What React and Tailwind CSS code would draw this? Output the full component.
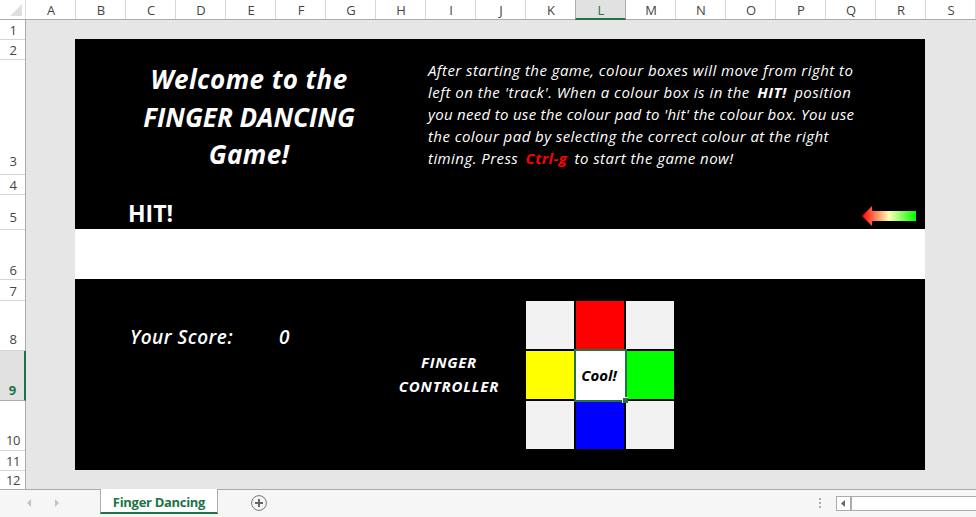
const COLUMNS = 'ABCDEFGHIJKLMNOPQRS'.split('');

const ROWS = [
  ['1', 'h-[20px]'],
  ['2', 'h-[20px]'],
  ['3', 'h-[115px] pb-[4px]'],
  ['4', 'h-[20px]'],
  ['5', 'h-[35px] pb-[3px]'],
  ['6', 'h-[50px]'],
  ['7', 'h-[21px]'],
  ['8', 'h-[50px] pb-[2px]'],
  ['9', 'h-[50px] pb-px'],
  ['10', 'h-[50px] pb-px'],
  ['11', 'h-[20px]'],
  ['12', 'h-[18px]'],
];

const PAD = [
  'bg-[#f2f2f2]', 'bg-[#ff0000]', 'bg-[#f2f2f2]',
  'bg-[#ffff00]', 'bg-white', 'bg-[#00ff00]',
  'bg-[#f2f2f2]', 'bg-[#0000ff]', 'bg-[#f2f2f2]',
];

function ColumnHeader() {
  return (
    <div className="flex h-[20px] shrink-0 border-b border-[#ababab] bg-white">
      <div className="flex w-[26px] shrink-0 items-end justify-end border-r border-[#dcdcdc] pr-[3px] pb-[3px]">
        <svg width="12" height="12" viewBox="0 0 12 12"><path d="M12 0V12H0Z" fill="#dfdfdf" /></svg>
      </div>
      {COLUMNS.map((c) =>
        c === 'L' ? (
          <div key={c} className="-ml-px h-[20px] w-[51px] shrink-0 border-x border-b-2 border-x-[#ababab] border-b-[#217346] bg-[#e1e1e1] pl-px text-center text-[13px] leading-[21px] text-[#217346]">{c}</div>
        ) : (
          <div key={c} className="w-[50px] shrink-0 border-r border-[#d6d6d6] pl-px text-center text-[13px] leading-[21px] text-[#444]">{c}</div>
        )
      )}
    </div>
  );
}

function RowHeader() {
  return (
    <div className="flex w-[26px] shrink-0 flex-col border-r border-[#ababab] bg-white">
      {ROWS.map(([n, h]) =>
        n === '9' ? (
          <div key={n} className={h + ' flex w-[26px] shrink-0 items-end justify-center border-r-2 border-b border-r-[#217346] border-b-[#ababab] bg-[#e1e1e1] pl-px text-[13px] leading-[18px] font-bold text-[#217346]'}>{n}</div>
        ) : (
          <div key={n} className={h + ' flex shrink-0 items-end justify-center pl-px text-[13px] leading-[18px] tracking-[-0.4px] text-[#444] ' + (n === '12' ? '' : 'border-b border-[#d6d6d6]')}>{n}</div>
        )
      )}
    </div>
  );
}

function Intro() {
  return (
    <div className="flex h-[190px] bg-black text-white">
      <div className="flex w-[353px] flex-col">
        <h1 className="mt-[22px] ml-[-5px] text-center text-[26px] leading-[37.5px] font-bold whitespace-nowrap italic">
          <span className="block tracking-[0.4px]">Welcome to the</span>
          <span className="block">FINGER DANCING</span>
          <span className="block tracking-[0.3px]">Game!</span>
        </h1>
        <div className="mt-[21px] ml-[53px] text-[23px] leading-[36px] font-bold">HIT!</div>
      </div>
      <div className="flex flex-1 flex-col">
        <p className="mt-[20px] text-[15px] leading-[22px] whitespace-nowrap italic">
          <span className="block tracking-[0.45px]">After starting the game, colour boxes will move from right to</span>
          <span className="block tracking-[0.5px]">left on the 'track'. When a colour box is in the <b className="mx-[3px]">HIT!</b> position</span>
          <span className="block tracking-[0.3px]">you need to use the colour pad to 'hit' the colour box. You use</span>
          <span className="block tracking-[0.43px]">the colour pad by selecting the correct colour at the right</span>
          <span className="block tracking-[0.44px]">timing. Press <b className="mx-[3px] text-[#ff0000]">Ctrl-g</b> to start the game now!</span>
        </p>
        <svg className="mt-[37px] mr-[9px] self-end" width="54" height="20" viewBox="0 0 54 20">
          <defs>
            <linearGradient id="arrow" x1="0" x2="1" y1="0" y2="0">
              <stop offset="0" stopColor="#ff0000" />
              <stop offset="0.5" stopColor="#ffffb0" />
              <stop offset="1" stopColor="#00ff00" />
            </linearGradient>
          </defs>
          <path d="M0 10L10 0V5H54V15H10V20Z" fill="url(#arrow)" />
        </svg>
      </div>
    </div>
  );
}

function Controller() {
  return (
    <div className="flex h-[191px] bg-black text-white italic">
      <div className="flex w-[299px] pt-[44px] pl-[55px] text-[19px] leading-[28px] font-semibold">
        <span className="w-[149px] tracking-[0.5px] whitespace-nowrap">Your Score:</span>
        <span>0</span>
      </div>
      <div className="w-[150px] pt-[71px] text-center text-[15px] leading-[24px] font-bold">
        <div className="tracking-[0.7px]">FINGER</div>
        <div className="tracking-[0.8px]">CONTROLLER</div>
      </div>
      <div className="ml-[2px] grid h-[170px] grid-cols-[48px_48px_48px] grid-rows-[48px_48px_48px] gap-[2px] pt-[22px]">
        {PAD.map((color, i) =>
          i === 4 ? (
            <div key={i} className="relative">
              <div className="absolute -top-[2px] -left-[2px] flex h-[53px] w-[53px] items-center justify-center border-2 border-[#217346] bg-white pr-[3px] text-[15px] font-bold text-black">
                Cool!
              </div>
              <div className="absolute -right-[4px] -bottom-[4px] h-[6px] w-[6px] border-t border-l border-white bg-[#217346]" />
            </div>
          ) : (
            <div key={i} className={color} />
          )
        )}
      </div>
    </div>
  );
}

function SheetBar() {
  return (
    <div className="flex h-[28px] shrink-0 border-t border-[#ababab] bg-[#f6f6f6]">
      <div className="flex w-[100px] gap-[24px] pt-[9px] pl-[27px]">
        <svg width="4" height="8" viewBox="0 0 4 8"><path d="M4 0V8L0 4Z" fill="#c3c3c3" /></svg>
        <svg width="4" height="8" viewBox="0 0 4 8"><path d="M0 0V8L4 4Z" fill="#c3c3c3" /></svg>
      </div>
      <div className="-mt-px h-[25px] w-[118px] border-x border-b-2 border-x-[#ababab] border-b-[#217346] bg-white text-center text-[13px] leading-[26px] font-bold tracking-[-0.3px] whitespace-nowrap text-[#217346]">
        Finger Dancing
      </div>
      <svg className="mt-[5px] ml-[33px]" width="16" height="16" viewBox="0 0 16 16" fill="none">
        <circle cx="8" cy="8" r="7.4" stroke="#777" strokeWidth="1" />
        <path d="M8 4V12M4 8H12" stroke="#666" strokeWidth="2" />
      </svg>
      <div className="mt-[8px] ml-auto flex flex-col gap-[2px]">
        <i className="h-[2px] w-[2px] bg-[#ababab]" />
        <i className="h-[2px] w-[2px] bg-[#ababab]" />
        <i className="h-[2px] w-[2px] bg-[#ababab]" />
      </div>
      <div className="mt-[6px] ml-[15px] flex h-[15px] w-[140px] border-y border-l border-[#ababab] bg-white">
        <div className="flex w-[15px] items-center border-r-2 border-[#ababab] pl-[4px]">
          <svg width="4" height="7" viewBox="0 0 4 7"><path d="M4 0V7L0 3.5Z" fill="#666" /></svg>
        </div>
      </div>
    </div>
  );
}

export default function App() {
  return (
    <div className="flex h-[517px] w-[976px] flex-col overflow-hidden bg-[#e6e6e6] font-['Open_Sans','Noto_Sans',sans-serif]">
      <ColumnHeader />
      <div className="flex h-[469px] shrink-0">
        <RowHeader />
        <div className="-mt-px -ml-px flex-1 pt-[20px] pl-[50px]">
          <div className="w-[850px]">
            <Intro />
            <div className="h-[50px] bg-white" />
            <Controller />
          </div>
        </div>
      </div>
      <SheetBar />
    </div>
  );
}
